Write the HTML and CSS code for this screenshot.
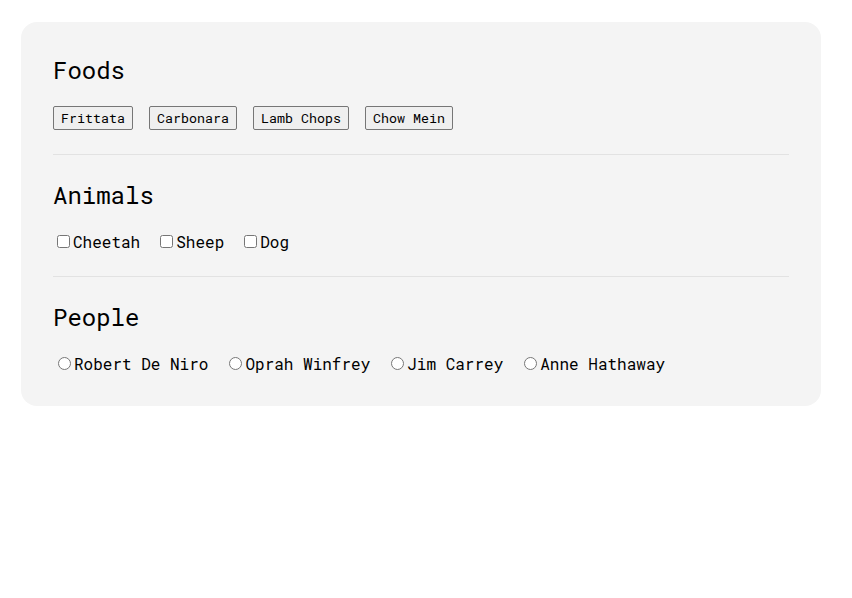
FILE: index.html
```html
<!DOCTYPE html>
<html>
<head>
<meta charset="utf-8">
<link rel="stylesheet" href="styles.css">
</head>
<body>
<main class="card">
  <section class="group">
    <h2 class="title">Foods</h2>
    <div class="row row-buttons">
      <button class="chip">Frittata</button>
      <button class="chip">Carbonara</button>
      <button class="chip">Lamb Chops</button>
      <button class="chip">Chow Mein</button>
    </div>
  </section>
  <section class="group">
    <h2 class="title">Animals</h2>
    <div class="row">
      <label class="opt opt-check"><input type="checkbox">Cheetah</label>
      <label class="opt opt-check"><input type="checkbox">Sheep</label>
      <label class="opt opt-check"><input type="checkbox">Dog</label>
    </div>
  </section>
  <section class="group">
    <h2 class="title">People</h2>
    <div class="row">
      <label class="opt opt-radio"><input type="radio" name="p">Robert De Niro</label>
      <label class="opt opt-radio"><input type="radio" name="p">Oprah Winfrey</label>
      <label class="opt opt-radio"><input type="radio" name="p">Jim Carrey</label>
      <label class="opt opt-radio"><input type="radio" name="p">Anne Hathaway</label>
    </div>
  </section>
</main>
</body>
</html>
```
FILE: styles.css
```css
html, body {
  margin: 0;
  padding: 0;
  background: #ffffff;
}
body {
  padding: 22px 31px 0 21px;
  font-family: "Roboto Mono", "DejaVu Sans Mono", monospace;
  color: #000;
}
.card {
  width: 800px;
  box-sizing: border-box;
  background: #f4f4f4;
  border-radius: 16px;
  padding: 32px 32px 32px 32px;
}
.group {
  padding: 24px 0 24px 0;
  border-top: 1px solid #e2e2e2;
}
.group:first-child {
  border-top: none;
  padding-top: 0;
}
.group:last-child {
  padding-bottom: 0;
}
.title {
  margin: 0 0 20px 0;
  font-size: 24px;
  font-weight: 400;
  line-height: 32px;
}
.row {
  display: flex;
  align-items: center;
  gap: 16px;
  height: 21px;
}
.row-buttons {
  height: 24px;
}
.chip {
  font-family: "Roboto Mono", "DejaVu Sans Mono", monospace;
  font-size: 13.33px;
  height: 24px;
  padding: 1px 7px;
  border: 1px solid #767676;
  border-radius: 2px;
  background: #efefef;
  color: #000;
}
.opt {
  display: flex;
  align-items: center;
  font-size: 16px;
  line-height: 21px;
}
.opt input {
  width: 13px;
  height: 13px;
  margin: 0 3px 0 4px;
}
.opt-radio input {
  margin: 0 3px 0 5px;
}
```
